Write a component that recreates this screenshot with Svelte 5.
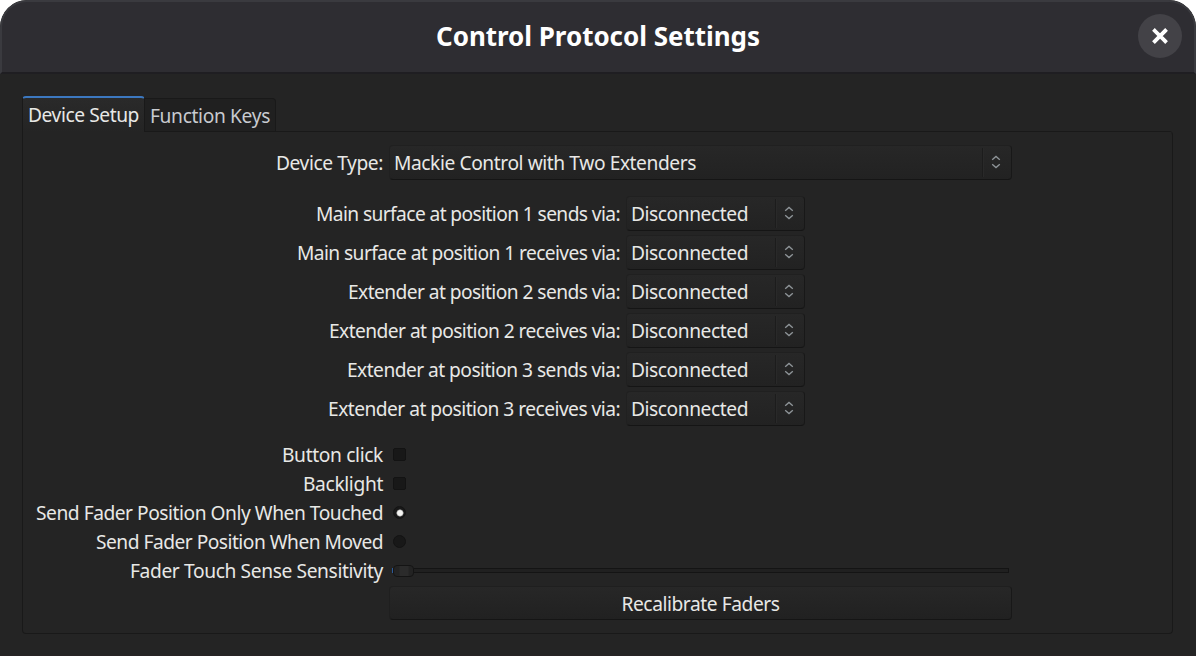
<script>
  const routes = [
    ['Main surface at position 1 sends via:', 304],
    ['Main surface at position 1 receives via:', 323],
    ['Extender at position 2 sends via:', 272],
    ['Extender at position 2 receives via:', 291],
    ['Extender at position 3 sends via:', 273],
    ['Extender at position 3 receives via:', 292],
  ];

  // Tracks a line of text out to the given width.
  function fit(node, width) {
    const count = node.textContent.length;
    const natural = node.getBoundingClientRect().width;
    const spacing = (width - natural) / count;
    node.style.letterSpacing = `${spacing}px`;
  }
</script>

{#snippet arrows()}
  <span class="arrows">
    <svg width="10" height="14" viewBox="0 0 10 14" fill="none" stroke="#8f9599" stroke-width="1.3">
      <path d="M1.2 4.8 L5 1.4 L8.8 4.8 M1.2 9.2 L5 12.6 L8.8 9.2" />
    </svg>
  </span>
{/snippet}

<div class="window">
  <header>
    <h1><span use:fit={324}>Control Protocol Settings</span></h1>
    <button class="close" aria-label="Close">
      <svg width="18" height="18" viewBox="0 0 18 18" stroke="#fff" stroke-width="3.8" stroke-linecap="square">
        <path d="M3.8 3.8 L14.2 14.2 M14.2 3.8 L3.8 14.2" />
      </svg>
    </button>
  </header>

  <main>
    <div class="tabs">
      <div class="tab active"><span use:fit={111}>Device Setup</span></div>
      <div class="tab"><span use:fit={120}>Function Keys</span></div>
    </div>
    <section>
      <div class="row type">
        <div class="label"><span use:fit={107}>Device Type:</span></div>
        <div class="combo wide"><span use:fit={302}>Mackie Control with Two Extenders</span>{@render arrows()}</div>
      </div>

      <div class="routes">
        {#each routes as [text, width]}
          <div class="route">
            <div class="label"><span use:fit={width}>{text}</span></div>
            <div class="combo"><span use:fit={117}>Disconnected</span>{@render arrows()}</div>
          </div>
        {/each}
      </div>

      <div class="options">
        <div class="row"><div class="label"><span use:fit={101}>Button click</span></div><i class="box"></i></div>
        <div class="row"><div class="label"><span use:fit={80}>Backlight</span></div><i class="box"></i></div>
        <div class="row"><div class="label"><span use:fit={347}>Send Fader Position Only When Touched</span></div><i class="box radio on"></i></div>
        <div class="row"><div class="label"><span use:fit={287}>Send Fader Position When Moved</span></div><i class="box radio"></i></div>
        <div class="row">
          <div class="label"><span use:fit={253}>Fader Touch Sense Sensitivity</span></div>
          <div class="slider"><i class="fill"></i><i class="knob"></i><i class="track"></i></div>
        </div>
      </div>
      <button class="recalibrate"><span use:fit={158}>Recalibrate Faders</span></button>
    </section>
  </main>
</div>

<style>
  :global(body) { margin: 0; background: #fff; overflow: hidden; }
  .window {
    box-sizing: border-box; width: 1196px; height: 656px; overflow: hidden;
    background: #242424; border-radius: 27px 27px 0 0;
    font: 19.2px/24px "Noto Sans", sans-serif; color: #e8e8e6;
    border-bottom: 1px solid #272324;
  }
  span { white-space: pre; }
  header {
    box-sizing: border-box; height: 74px; display: grid; grid-template-columns: 1fr auto 1fr;
    align-items: center; background: #2e2d32; border: 2px solid #3a3a3f;
    border-bottom: 2px solid #1f1e22; border-radius: 27px 27px 0 0; padding-bottom: 2px;
  }
  h1 { grid-column: 2; margin: 0; font-size: 26px; line-height: 36px; font-weight: 700; color: #fff; }
  .close {
    justify-self: end; width: 44px; height: 44px; margin-right: 12px; padding: 0;
    display: grid; place-items: center; border: 0; border-radius: 50%; background: #434247;
  }
  main { padding: 22px 23px 0 22px; }
  .tabs { height: 36px; display: flex; align-items: flex-end; margin-bottom: -1px; }
  .tab {
    box-sizing: border-box; height: 34px; padding: 5px 0 0 5px; width: 131px;
    background: #202020; border: 1px solid #191919; border-left: 0;
    border-radius: 0 4px 0 0; color: #c8cbd0;
  }
  .tab.active {
    height: 36px; width: 123px; background: linear-gradient(#2a2a2a, #242424);
    border: 1px solid #191919; border-top: 2px solid #3c78c0; border-bottom: 0;
    border-radius: 4px 4px 0 0; color: #e8e8e6;
  }
  section {
    box-sizing: border-box; height: 503px; padding: 13px 0 0;
    border: 1px solid #191919; border-radius: 0 4px 4px 4px; border-top-color: transparent;
    background: linear-gradient(#191919, #191919) 122px 0 / 100% 1px no-repeat border-box;
  }
  .label { text-align: right; line-height: 24px; }
  .row { display: grid; grid-template-columns: 360px 1fr; column-gap: 6px; align-items: center; }
  .combo {
    box-sizing: border-box; width: 179px; height: 35px; padding-left: 4px;
    display: flex; align-items: center; justify-content: space-between;
    border: 1px solid #202020; border-right-color: #181818; border-bottom-color: #151515;
    border-radius: 4px; background: linear-gradient(#272727, #222222);
  }
  .wide { width: 623px; }
  .arrows {
    box-sizing: border-box; width: 29px; height: 29px; padding: 0 2px 1px 0;
    display: grid; place-items: center; border-left: 1px solid #1c1c1c; box-shadow: inset 1px 0 #292929;
  }
  .routes { display: grid; row-gap: 4px; margin-top: 16px; }
  .route { display: grid; grid-template-columns: 597px 179px; column-gap: 6px; align-items: center; }
  .options { margin-top: 14px; }
  .options .row { height: 29px; }
  .options .label { padding-top: 0; }
  .box {
    box-sizing: border-box; width: 13px; height: 13px; margin-left: 4px;
    background: #181818; border: 1px solid #131313; border-radius: 2px;
  }
  .radio { border-radius: 50%; }
  .on { background: radial-gradient(circle at 6px 6px, #f4f4f2 0 2.4px, #a0a0a0 3.2px, #181818 3.9px); }
  .slider { display: flex; align-items: center; width: 620px; height: 12px; padding-left: 3px; }
  .fill { width: 1px; height: 5px; background: #2c5a99; }
  .knob {
    box-sizing: border-box; width: 21px; height: 12px; border: 1px solid #141414;
    border-radius: 4px; background: linear-gradient(90deg, #232323 5px, #2b2b2b 6px 14px, #232323 15px);
  }
  .track { box-sizing: border-box; width: 595px; height: 5px; border: 1px solid #141414; border-left: 0; background: #202020; }
  .recalibrate {
    display: block; box-sizing: border-box; width: 623px; height: 34px; margin: 1px 0 0 366px; padding: 2px 0 0;
    border: 1px solid #1f1f1f; border-right-color: #181818; border-bottom-color: #151515; border-radius: 4px;
    background: linear-gradient(#272727, #212121); font: inherit; color: inherit;
  }
</style>
